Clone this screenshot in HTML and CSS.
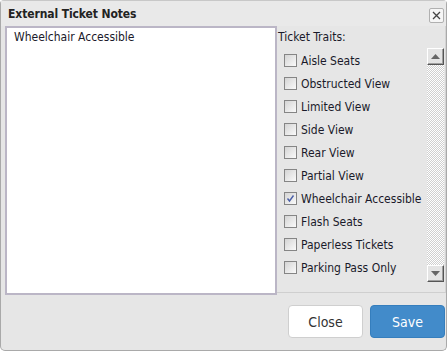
FILE: index.html
```html
<!DOCTYPE html>
<html lang="en">
<head>
    <meta charset="UTF-8">
    <title>External Ticket Notes</title>
    <link rel="stylesheet" href="styles.css">
</head>
<body>
    <div class="dialog">
        <div class="titlebar">
            <span class="title">External Ticket Notes</span>
            <button class="close-x" type="button">
                <svg width="9" height="9" viewBox="0 0 9 9"><path d="M1 1L8 8M8 1L1 8" stroke="#444" stroke-width="1.3"/></svg>
            </button>
        </div>
        <div class="dialog-body">
            <div class="notes">Wheelchair Accessible</div>
            <div class="traits">
                <div class="traits-label">Ticket Traits:</div>
                <div class="traits-box">
                    <ul class="trait-list">
                        <li><span class="check"></span>Aisle Seats</li>
                        <li><span class="check"></span>Obstructed View</li>
                        <li><span class="check"></span>Limited View</li>
                        <li><span class="check"></span>Side View</li>
                        <li><span class="check"></span>Rear View</li>
                        <li><span class="check"></span>Partial View</li>
                        <li><span class="check checked">
                            <svg width="9" height="9" viewBox="0 0 9 9"><path d="M1.5 4.5L3.5 7L7.5 1.5" fill="none" stroke="#4a5fa8" stroke-width="1.4"/></svg>
                        </span>Wheelchair Accessible</li>
                        <li><span class="check"></span>Flash Seats</li>
                        <li><span class="check"></span>Paperless Tickets</li>
                        <li><span class="check"></span>Parking Pass Only</li>
                    </ul>
                    <div class="scrollbar">
                        <div class="sb-btn"><svg width="9" height="5" viewBox="0 0 9 5"><path d="M0 5L4.5 0L9 5Z" fill="#666"/></svg></div>
                        <div class="sb-track"></div>
                        <div class="sb-btn"><svg width="9" height="5" viewBox="0 0 9 5"><path d="M0 0L4.5 5L9 0Z" fill="#666"/></svg></div>
                    </div>
                </div>
            </div>
        </div>
        <div class="footer">
            <button class="btn btn-default" type="button">Close</button>
            <button class="btn btn-primary" type="button">Save</button>
        </div>
    </div>
</body>
</html>
```

FILE: styles.css
```css
*{
    margin: 0;
    padding: 0;
    box-sizing: border-box;
}
body {
    font-family: "DejaVu Sans Condensed", "DejaVu Sans", sans-serif;
    font-size: 12px;
    color: #1a1a2a;
    background-color: #fff;
    width: 447px;
    height: 351px;
    overflow: hidden;
}
.dialog {
    width: 447px;
    height: 351px;
    background: #e6e6e6;
    border: 1px solid #a9a9a9;
    border-top-color: #c8c8c8;
    border-radius: 4px 4px 5px 5px;
    display: flex;
    flex-direction: column;
}
.titlebar {
    height: 25px;
    display: flex;
    align-items: center;
    justify-content: space-between;
    padding: 0 2px 0 7px;
    background: #e9e9e9;
}
.title {
    font-weight: bold;
    font-size: 12px;
    color: #222;
    letter-spacing: -0.1px;
}
.close-x {
    width: 15px;
    height: 15px;
    border: 1px solid #b0b0b0;
    border-radius: 2px;
    background: #f6f6f6;
    display: flex;
    align-items: center;
    justify-content: center;
    margin-top: 3px;
}
.dialog-body {
    display: flex;
    padding-left: 4px;
    height: 269px;
}
.notes {
    width: 272px;
    height: 269px;
    background: #fff;
    border: 2px solid #bbb6c6;
    padding: 2px 7px;
    font-size: 12px;
}
.traits {
    flex: 1;
    display: flex;
    flex-direction: column;
    border-right: 1px solid #d4d4d4;
    border-bottom: 1px solid #cfcfcf;
    margin-bottom: 2px;
}
.traits-label {
    padding: 4px 0 0 1px;
    height: 22px;
}
.traits-box {
    display: flex;
    flex: 1;
}
.trait-list {
    list-style: none;
    flex: 1;
    padding: 1px 0 0 7px;
}
.trait-list li {
    height: 23px;
    display: flex;
    align-items: center;
}
.check {
    width: 13px;
    height: 13px;
    border: 1px solid #858585;
    background: linear-gradient(135deg, #d4d4d4, #fafafa);
    margin-right: 4px;
    display: flex;
    align-items: center;
    justify-content: center;
}
.scrollbar {
    width: 17px;
    display: flex;
    flex-direction: column;
    margin: 0 1px 10px 0;
}
.sb-btn {
    height: 17px;
    background: #e4e4e4;
    border: 1px solid;
    border-color: #fff #555 #555 #fff;
    box-shadow: inset -1px -1px 0 #a0a0a0;
    display: flex;
    align-items: center;
    justify-content: center;
}
.sb-track {
    flex: 1;
    background-color: #fff;
    background-image: repeating-conic-gradient(#d0d0d0 0 25%, #fff 0 50%);
    background-size: 2px 2px;
}
.footer {
    flex: 1;
    display: flex;
    justify-content: flex-end;
    align-items: flex-start;
    gap: 7px;
    padding: 10px 1px 0 0;
}
.btn {
    height: 33px;
    border-radius: 4px;
    font-family: "DejaVu Sans Condensed", "DejaVu Sans", sans-serif;
    font-size: 14px;
    border: 1px solid;
}
.btn-default {
    width: 75px;
    background: #fff;
    border-color: #cfcfcf;
    color: #333;
}
.btn-primary {
    width: 75px;
    background: #428bca;
    border-color: #357ebd;
    color: #fff;
}
```
